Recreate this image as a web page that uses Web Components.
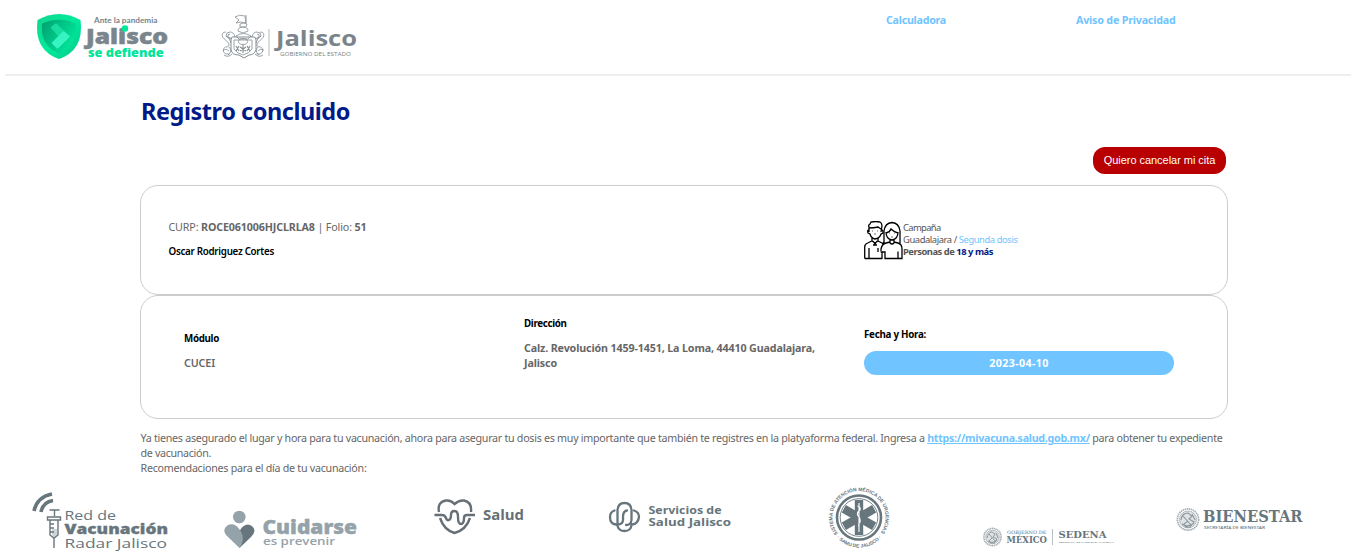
<!DOCTYPE html>
<html lang="es">
<head>
<meta charset="utf-8">
<title>Registro concluido</title>
<style>
html,body{margin:0;background:#fff;overflow:hidden}
body{font-family:"Noto Sans","Open Sans",sans-serif;font-size:10.7px;line-height:15px;color:#666}
</style>
</head>
<body>
<registro-page></registro-page>

<template id="t-page">
<style>
:host{display:block;height:560px;overflow:hidden}
main{margin:0 123px 0 140px}
h1{margin:0;padding:20px 0 1px 1px;font-size:23.5px;line-height:30px;height:50px;color:#001a87}
.actions{display:flex;justify-content:flex-end;padding-right:2px;height:38px}
.who{padding:34px 0 0 27.500px;width:695px;box-sizing:border-box}
.name{color:#000;font-weight:600;font-size:9.8px;margin-top:9px}
.camp{display:flex;padding-top:35px;line-height:12px;font-size:9.4px;color:#555}
.camp .t{padding-top:1px}
.blue{color:#70c4ff}.navy{color:#001a87}
b{font-weight:700}
a{color:#70c4ff;font-weight:700;text-decoration:underline}
.notes{padding:12px 0 0 .5px;height:49px}
</style>
<site-header></site-header>
<main>
<h1><fit-text w="209">Registro concluido</fit-text></h1>
<div class="actions"><cancel-button>Quiero cancelar mi cita</cancel-button></div>
<info-card style="--h:110px">
  <div class="who"><fit-text w="198">CURP: <b>ROCE061006HJCLRLA8</b> | Folio: <b>51</b></fit-text>
  <div class="name"><fit-text w="105.500">Oscar Rodriguez Cortes</fit-text></div></div>
  <div class="camp" style="margin-left:28px"><people-icon></people-icon><div class="t"><fit-text w="37.500">Campaña</fit-text><fit-text w="114.500">Guadalajara / <span class="blue">Segunda dosis</span></fit-text><fit-text w="90"><b>Personas de <span class="navy">18 y más</span></b></fit-text></div></div>
</info-card>
<info-card style="--h:124px">
  <data-field style="padding:35px 0 0 43px;width:340px"><fit-text slot="label" w="35">Módulo</fit-text><fit-text w="31" style="font-weight:600">CUCEI</fit-text></data-field>
  <data-field style="padding-top:20px;width:340px"><fit-text slot="label" w="42.500">Dirección</fit-text><fit-text w="291">Calz. Revolución 1459-1451, La Loma, 44410 Guadalajara,</fit-text><fit-text w="33">Jalisco</fit-text></data-field>
  <data-field style="padding-top:31px;width:310px;--gap:9px"><fit-text slot="label" w="62">Fecha y Hora:</fit-text><date-pill><fit-text w="59.500">2023-04-10</fit-text></date-pill></data-field>
</info-card>
<div class="notes">
<fit-text w="1082">Ya tienes asegurado el lugar y hora para tu vacunación, ahora para asegurar tu dosis es muy importante que también te registres en la platyaforma federal. Ingresa a <a>https://mivacuna.salud.gob.mx/</a> para obtener tu expediente</fit-text>
<fit-text w="70.500">de vacunación.</fit-text>
<fit-text w="226">Recomendaciones para el día de tu vacunación:</fit-text>
</div>
</main>
<partner-logos></partner-logos>
</template>

<template id="t-header">
<style>
:host{display:flex;height:74px;margin-left:5px;border-bottom:2px solid #eee;font-weight:700;color:#70c4ff}
svg{display:block;flex:none}
nav{display:flex;padding:13px 0 0 516px}
nav fit-text{width:190px}
</style>
<svg style="margin-left:25px" width="180" height="74" viewBox="30 0 180 74">
<defs><linearGradient id="g1" x1="0" x2="1" y2="1"><stop stop-color="#12d68f"/><stop offset=".5" stop-color="#00eb9a"/><stop offset="1" stop-color="#00c98c"/></linearGradient>
<linearGradient id="g2" x1="0" x2="1" y2=".6"><stop stop-color="#00a06f"/><stop offset="1" stop-color="#00e89b"/></linearGradient></defs>
<path d="M37.500 20Q48 14 59 14T80.500 20Q82.500 35 77 45Q71 55 59 59Q47 55 41 45Q35.500 35 37.500 20Z" fill="url(#g1)"/>
<path d="M42 23.500Q50 20 59 19.800T76 23.500Q77 35 73 42Q68 50 59 53.500Q50 50 45 42Q41 35 42 23.500Z" fill="url(#g2)"/>
<path d="M51.500 27.500L56 24L69 36.500L64 41.500Z" fill="#19dda0" stroke="#19dda0" stroke-width="1.500" stroke-linejoin="round"/>
<path d="M52.500 43L63.500 32L69 36.500L57.500 48Z" fill="#37f5c2" stroke="#37f5c2" stroke-width="1.500" stroke-linejoin="round"/>
<text x="94" y="22.500" font-family="Lato" font-weight="700" font-size="7" textLength="63.500" lengthAdjust="spacingAndGlyphs" fill="#7a848a">Ante la pandemia</text>
<text x="86" y="43.500" font-family="Open Sans" font-weight="800" font-size="21" textLength="82" lengthAdjust="spacingAndGlyphs" fill="#7a858c" stroke="#7a858c" stroke-width=".5">Jalisco</text>
<circle cx="125" cy="28.500" r="3.200" fill="#00e599"/>
<text x="88" y="57" font-family="Open Sans" font-weight="800" font-size="12.500" textLength="75.500" lengthAdjust="spacingAndGlyphs" fill="#00e599">se defiende</text>
</svg>
<svg width="160" height="74" viewBox="210 0 160 74" fill="none">
<g stroke="#858d93" stroke-width=".8">
<path d="M235 17q4-3 10-1l1 7q-6-2-10 0l3-3zM246 15v8M240 24q4-2 7 0l-1 3h-6zM238 31q0-4 5-4t5 4l-5 2zM236 36q7-5 15 0l-3 3h-9z"/>
<path d="M232 37h22q2 0 2 3v10q-2 5-7 5l-5 3-5-3q-7 0-8-5V40q0-3 1-3z" stroke-width="1"/>
<path d="M234 40h18v9q-2 4-9 6q-7-2-9-6z"/><ellipse cx="243" cy="41.500" rx="4.500" ry="3"/>
<path d="M236 46l3 5m0-5l-3 5M243 45v8M240 47l6 4m-6 0l6-4M247 46l3 5m0-5l-3 5" stroke-width="1.100"/>
<path d="M235 37q-1-5-5-5q-4 0-4 4l4 3M226 32q-5 0-3.500 5q3 3 6 6q2 4-3 4q-3 1-2 5q2 3 6 2M231 43q-1-5-5-7M229 47q4 4-1 8M223 50q4-2 6 1M230 34q-3 0-2 3l4 2M232 54q-4 4-8 1"/>
<path d="M252 37q1-5 5-5q4 0 4 4l-4 3M260 32q5 0 3.500 5q-3 3-6 6q-2 4 3 4q3 1 2 5q-2 3-6 2M256 43q1-5 5-7M258 47q-4 4 1 8M264 50q-4-2-6 1M257 34q3 0 2 3l-4 2M255 54q4 4 8 1"/>
</g>
<path d="M269 29v27" stroke="#b5babd"/>
<text x="276" y="45.500" font-family="Open Sans" font-weight="700" font-size="21.500" textLength="81" lengthAdjust="spacingAndGlyphs" fill="#7b848a">Jalisco</text>
<text x="280" y="55.500" font-family="Open Sans" font-weight="400" font-size="5" textLength="71" lengthAdjust="spacingAndGlyphs" fill="#777f84">GOBIERNO DEL ESTADO</text>
</svg>
<nav><fit-text w="60">Calculadora</fit-text><fit-text w="99.500">Aviso de Privacidad</fit-text></nav>
</template>

<template id="t-people">
<style>:host{display:block;width:39px;height:39px;flex:none}svg{display:block}</style>
<svg width="39" height="39" viewBox="0 0 39 39" fill="none" stroke="#000" stroke-width="1.300">
<path d="M5 11V6q-1-2 1-3l1-2q5-1 9 0q2 1 2 4l-1 6M5 7q5 0 9-1l3 2M5 9q-2 0-1 3l2 1q1 4 5 5q5-1 6-5l2-1q0-3-1-3"/>
<path d="M8 17v3l3 2 3-2v-3M9 20l2 3 2-3M9 24h4M.700 37.500V26q0-3 3-4l4-2M14 20l4 2M.700 37.500H18M5 27v11M14 27v4"/>
<path d="M20 22V10q1-8 8-8.500q7 .5 8 8.500v13M22 11q0 7 6 8q6-1 6-8M22 12q4-1 5-4q3 3 7 4M26 18v4q2 2 4 0v-4M18 38v-6q-1 0-1-4q1-5 5-6l4-1M30 21l4 1q4 1 4 6v9.500H34v-7M18 31h3v6.500h14M20 21l-2 2"/>
<path d="M8 10h1m4 0h1M10 13h2M25 12h1m4 0h1M27 16h2" stroke-width=".8" opacity=".7"/>
</svg>
</template>

<template id="t-logos">
<style>:host{display:grid;grid-template-columns:repeat(7,190px);padding-left:20px;height:80px}svg{display:block}</style>
<svg width="190" height="80" viewBox="20 480 190 80" fill="#67757c">
<g fill="none" stroke="#67757c"><path d="M34 511Q37 497 52 494M41 512Q43 502 53 500.500" stroke-width="3.600"/><path d="M49.500 510h10M54.500 510v6M47.500 517h13v3h-13zM50 520v15l4 3 4-3v-15M54 538v10M50 524h4M50 528h4M50 532h4" stroke-width="1.400"/></g>
<path d="M52 529h5v6l-3 2-2-2z" opacity=".3"/>
<text x="64.500" y="519.500" font-family="Open Sans" font-size="13" font-weight="500" textLength="51.500" lengthAdjust="spacingAndGlyphs">Red de</text>
<text x="64.500" y="533.500" font-family="Open Sans" font-size="14" font-weight="800" textLength="103.500" lengthAdjust="spacingAndGlyphs" stroke="#67757c" stroke-width=".3">Vacunación</text>
<text x="64.500" y="547.500" font-family="Open Sans" font-size="13" font-weight="500" textLength="102.500" lengthAdjust="spacingAndGlyphs">Radar Jalisco</text>
</svg>
<svg width="190" height="80" viewBox="210 480 190 80" fill="#94a2aa">
<circle cx="239.300" cy="517" r="6.300"/><path d="M239.500 531Q243 524.500 248 524.500Q254 525.500 254.500 531Q254 534 251 537L239.500 548Z" fill="#67757c"/>
<path d="M239.500 548L227 536Q223 532 225 528Q228 523 234 524.500Q237 525.500 240 530Q246 539 239.500 548Z"/>
<text x="262.500" y="534" font-family="Open Sans" font-size="19" font-weight="800" textLength="94.500" lengthAdjust="spacingAndGlyphs" stroke="#94a2aa" stroke-width=".4">Cuidarse</text>
<text x="263" y="545" font-family="Open Sans" font-size="10.500" font-weight="600" textLength="72" lengthAdjust="spacingAndGlyphs">es prevenir</text>
</svg>
<svg width="190" height="80" viewBox="400 480 190 80" fill="#666f75">
<g fill="none" stroke="#666f75" stroke-width="2.400"><path d="M439 512Q437 502 446 500.500Q451 500 454.500 504Q459 500 464 500.500Q472 502 471 512M440 518Q444 530 454.500 533Q466 530 470 518"/><path d="M434.500 515H442Q445 515 446 518Q447 521 449 520Q451 519 451 515Q451 511 454.500 511Q458 511 458 517Q458 524 461 524Q464 524 464 518Q464 515 467 515H475"/></g>
<text x="483" y="519.500" font-family="Open Sans" font-size="13.500" font-weight="700" textLength="41" lengthAdjust="spacingAndGlyphs">Salud</text>
</svg>
<svg width="190" height="80" viewBox="590 480 190 80" fill="#67757c">
<g fill="none" stroke="#67757c" stroke-width="2.300" stroke-linecap="round"><path d="M617.500 523V510Q618 503 624.500 503Q631 503 631.500 510V520Q631 525 626 525M617.500 526Q619 531 624.500 531Q631 531 631.500 525M614.500 510.500Q610 512 610 517Q610 524 616 524.500H618Q623 524 623 520V517Q623 511 627 510.500M634 510.500Q639 512 639 517Q638 524 632 524.500"/></g>
<text x="648.500" y="513.500" font-family="Open Sans" font-size="11.300" font-weight="700" textLength="73" lengthAdjust="spacingAndGlyphs">Servicios de</text>
<text x="648.500" y="526" font-family="Open Sans" font-size="11.300" font-weight="700" textLength="82.500" lengthAdjust="spacingAndGlyphs">Salud Jalisco</text>
</svg>
<svg width="190" height="80" viewBox="780 480 190 80" fill="#67757c">
<circle cx="859" cy="517.500" r="22" fill="none" stroke="#67757c" stroke-width="2.600"/><circle cx="859" cy="517.500" r="18.800" fill="none" stroke="#67757c" stroke-width=".9"/>
<path d="M854.800 500h8.400v35h-8.400z"/><path d="M854.800 500h8.400v35h-8.400z" transform="rotate(60 859 517.500)"/><path d="M854.800 500h8.400v35h-8.400z" transform="rotate(-60 859 517.500)"/>
<path d="M859 503v29M857.500 506q3.500 1 2.500 4q-3 2-2.500 5q3.500 3 2.500 7q-2 2-1 5" fill="none" stroke="#fff" stroke-width="1.100"/>
<path id="top" d="M840.500 536.500A26.500 26.500 0 1 1 877.500 536.500" fill="none"/><path id="bot" d="M835 535.500A30 30 0 0 0 883 535.500" fill="none"/>
<text font-family="Liberation Sans" font-size="4.900" font-weight="700"><textPath href="#top" startOffset="4" textLength="116">SISTEMA DE ATENCIÓN MÉDICA DE URGENCIAS</textPath></text>
<text font-family="Liberation Sans" font-size="4.900" font-weight="700"><textPath href="#bot" startOffset="3" textLength="50">· SAMU DE JALISCO ·</textPath></text>
</svg>
<svg width="190" height="80" viewBox="970 480 190 80" fill="#67757c">
<g fill="none" stroke="#8c979d"><circle cx="992.500" cy="537" r="8.600" stroke-width="1.600" stroke-dasharray="1.300 .5" stroke="#a5aeb3"/><circle cx="992.500" cy="537" r="6.800" fill="#dfe3e5" stroke-width=".6"/><path d="M987 538q1-6 5-6l3 2-2 3 4 2-3 4q-4 1-5-2l3-3M989 534l6 7M988 541q5 3 9-1M996 533l2 5" stroke-width="1"/></g>
<text x="1007" y="534.200" font-family="DejaVu Serif" font-size="4.600" textLength="39.500" lengthAdjust="spacingAndGlyphs">GOBIERNO DE</text>
<text x="1006.500" y="542.800" font-family="DejaVu Serif" font-weight="700" font-size="8.400" textLength="40.500" lengthAdjust="spacingAndGlyphs">MÉXICO</text>
<path d="M1052.500 529v16" stroke="#b9c0c4"/>
<text x="1058.500" y="538" font-family="DejaVu Serif" font-weight="700" font-size="10" textLength="48" lengthAdjust="spacingAndGlyphs">SEDENA</text>
<text x="1059" y="543" font-family="Noto Sans" font-size="2.400" textLength="55" lengthAdjust="spacingAndGlyphs">SECRETARÍA DE LA DEFENSA NACIONAL</text>
</svg>
<svg width="190" height="80" viewBox="1160 480 190 80" fill="#67757c">
<g fill="none" stroke="#8c979d"><circle cx="1188" cy="519.500" r="10.600" stroke-width="1.700" stroke-dasharray="1.500 .6" stroke="#a5aeb3"/><circle cx="1188" cy="519.500" r="8.500" fill="#dfe3e5" stroke-width=".6"/><path d="M1181 520q1-7 7-7l4 3-3 3 5 3-4 5q-5 1-6-3l4-3M1183 516l8 9M1182 524q6 4 12-1M1192 514l3 6" stroke-width="1.100"/></g>
<text x="1203" y="521.500" font-family="DejaVu Serif" font-weight="700" font-size="16" textLength="99.500" lengthAdjust="spacingAndGlyphs">BIENESTAR</text>
<text x="1204" y="528.500" font-family="Noto Sans" font-weight="500" font-size="3.600" textLength="61" lengthAdjust="spacingAndGlyphs">SECRETARÍA DE BIENESTAR</text>
</svg>
</template>

<script>
const define = (name, content) => customElements.define(name, class extends HTMLElement {
  constructor(){
    super();
    const root = this.attachShadow({mode:'open'});
    if (content[0] === '#') root.append(document.querySelector(content).content.cloneNode(true));
    else root.innerHTML = content;
  }
});
// One line of text whose tracking is adjusted to a given width
define('fit-text', '<style>:host{display:block;white-space:nowrap}span{display:inline-block}</style><span><slot></slot></span>');
define('cancel-button', '<style>:host{display:block}button{display:block;width:133px;height:27px;padding:0 0 2px;border:0;border-radius:12px;background:#b80000;color:#fff;font:11px "Liberation Sans",Arial,sans-serif;letter-spacing:-.04px;white-space:nowrap}</style><button><slot></slot></button>');
define('info-card', '<style>:host{display:flex;align-items:flex-start;box-sizing:border-box;width:1088px;height:var(--h);border:1px solid #ccc;border-radius:18px}</style><slot></slot>');
define('data-field', '<style>:host{display:block;flex:none;font-weight:700}.l{color:#000;font-size:9.8px;margin-bottom:var(--gap,10px)}</style><div class="l"><slot name="label"></slot></div><slot></slot>');
define('date-pill', '<style>:host{display:flex;align-items:center;justify-content:center;box-sizing:border-box;height:24px;padding-top:1px;border-radius:12px;background:#70c4ff;color:#fff}</style><slot></slot>');
define('people-icon', '#t-people');
define('site-header', '#t-header');
define('partner-logos', '#t-logos');
define('registro-page', '#t-page');

const fit = root => {
  root.querySelectorAll('*').forEach(el => {
    if (el.localName === 'fit-text') {
      const span = el.shadowRoot.querySelector('span');
      const gap = el.getAttribute('w') - span.getBoundingClientRect().width;
      span.style.letterSpacing = gap / el.textContent.length + 'px';
    } else if (el.shadowRoot) fit(el.shadowRoot);
  });
};
fit(document);
</script>
</body>
</html>
